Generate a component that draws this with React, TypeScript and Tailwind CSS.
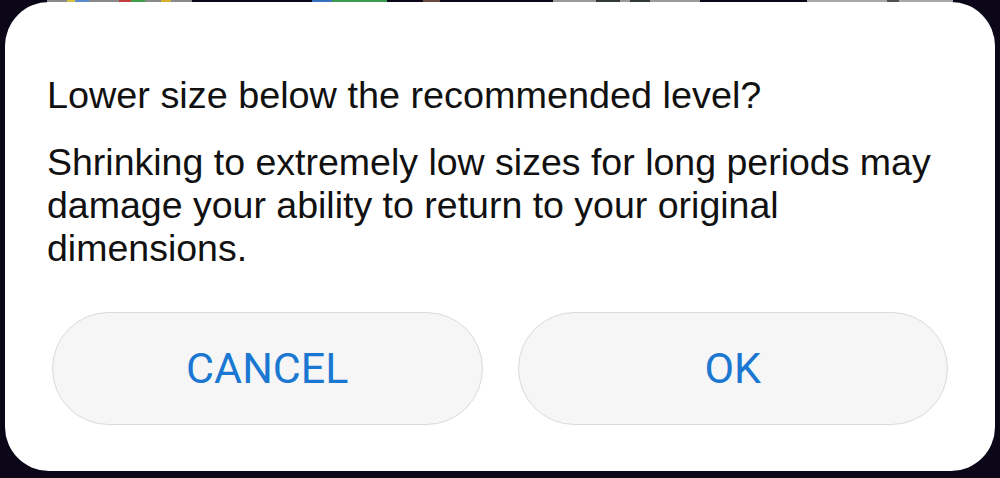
export default function App() {
  return (
    <div className="w-[1000px] h-[478px] bg-[#0b0718] flex flex-col px-[5px] pb-[7px] overflow-hidden">
      {/* bits of the home screen peeking above the dialog */}
      <div className="h-[2px] flex shrink-0 -mx-[5px]">
        <div className="w-[47px]" />
        <div className="w-[145px] bg-[#8a8a8a] flex">
          <div className="w-[20px]" />
          <div className="w-[8px] bg-[#d8c040]" />
          <div className="w-[14px] bg-[#5a8ad0]" />
          <div className="w-[30px]" />
          <div className="w-[12px] bg-[#c04040]" />
          <div className="w-[14px] bg-[#40a050]" />
          <div className="w-[16px]" />
          <div className="w-[10px] bg-[#d8b030]" />
        </div>
        <div className="w-[120px]" />
        <div className="w-[20px] bg-[#3a6fc0]" />
        <div className="w-[55px] bg-[#3a9a50]" />
        <div className="w-[36px]" />
        <div className="w-[17px] bg-[#6b4a40]" />
        <div className="w-[113px]" />
        <div className="w-[147px] bg-[#9a9a9a] flex">
          <div className="w-[43px]" />
          <div className="w-[24px] bg-[#303838]" />
          <div className="w-[10px]" />
          <div className="w-[20px] bg-[#303838]" />
        </div>
        <div className="w-[107px]" />
        <div className="w-[146px] bg-[#a8a8a8] flex">
          <div className="w-[80px]" />
          <div className="w-[12px] bg-[#505050]" />
        </div>
      </div>

      <div className="flex-1 bg-white rounded-[44px] flex flex-col pt-[72px] pb-[46px] px-[42px] font-['Liberation_Sans',Arial,sans-serif] text-[#111]">
        <h1 className="text-[37.8px] leading-[43px] font-normal">
          Lower size below the recommended level?
        </h1>
        <p className="mt-[24px] text-[37.5px] leading-[43px] pr-[20px]">
          Shrinking to extremely low sizes for long periods may damage your ability to return to your original dimensions.
        </p>
        <div className="mt-auto flex gap-[35px] px-[5px]">
          <button className="flex-1 h-[113px] rounded-full bg-[#f6f6f6] border-[1.5px] border-[#dadada] text-[#1a78d2] text-[43px] font-['Roboto',sans-serif]">
            CANCEL
          </button>
          <button className="flex-1 h-[113px] rounded-full bg-[#f6f6f6] border-[1.5px] border-[#dadada] text-[#1a78d2] text-[43px] font-['Roboto',sans-serif]">
            OK
          </button>
        </div>
      </div>
    </div>
  );
}
